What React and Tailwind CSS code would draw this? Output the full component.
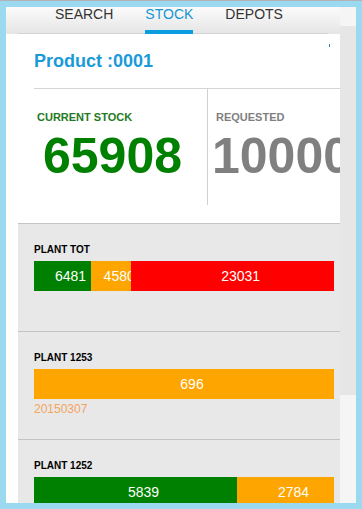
import React from "react";

const font = { fontFamily: '"Liberation Sans", Arial, sans-serif' };

function Bar({ segs }) {
  const total = segs.reduce((a, s) => a + s.v, 0);
  return (
    <div className="flex h-[30px] w-[300px]">
      {segs.map((s, i) => (
        <div
          key={i}
          className={`flex h-full items-center justify-center overflow-hidden whitespace-nowrap pl-4 text-[14px] leading-none text-white ${s.c}`}
          style={{ width: `${(s.v / total) * 100}%` }}
        >
          {s.v}
        </div>
      ))}
    </div>
  );
}

function Section({ label, segs, date }) {
  return (
    <div className="border-t border-[#c4c4c4] pl-4 pt-[20px] pb-[20px]">
      <div className="text-[10px] font-bold leading-[12px] text-black">{label}</div>
      <div className="mt-[5px]">
        <Bar segs={segs} />
      </div>
      <div className="h-[20px] text-[12px] leading-[20px] text-[#f4a460]">{date}</div>
    </div>
  );
}

export default function App() {
  return (
    <div className="h-[509px] w-[362px] bg-[#b3b3b3] pt-px" style={font}>
      <div className="flex h-[508px] w-[362px] overflow-hidden border-[6px] border-[#9ad9f0] bg-white">
        <div className="h-full w-[334px] overflow-hidden">
          {/* tab bar */}
          <div className="relative h-[27px] bg-gradient-to-b from-[#fbfbfb] to-[#e5e5e5]">
            <div className="absolute bottom-0 left-[12px] h-px w-[310px] bg-[#d4d4d4]" />
            <div className="flex gap-[32px] pl-[49px] text-[14px] leading-[14px]">
              <div className="text-[#333]">SEARCH</div>
              <div className="relative h-[27px] text-[#1496d4]">
                STOCK
                <div className="absolute bottom-0 left-0 h-[4px] w-full bg-[#0a9ee0]" />
              </div>
              <div className="text-[#333]">DEPOTS</div>
            </div>
          </div>
          {/* content */}
          <div className="flex">
            <div className="w-[12px] shrink-0" />
            <div className="w-[322px] shrink-0">
              <div className="relative bg-white">
                <div className="absolute right-[10px] top-[10px] h-[3px] w-px bg-[#1a8fd0]" />
                <div className="pl-[16px] pt-[17px] text-[18px] font-bold leading-[20px] text-[#1a9ad8]">
                  Product :0001
                </div>
                <div className="ml-4 mt-[17px] border-t border-[#d4d4d4]">
                  <div className="flex h-[116px] whitespace-nowrap">
                    <div className="w-[174px] shrink-0 border-r border-[#d0d0d0] pt-[22px]">
                      <div className="pl-[3px] text-[11px] font-bold leading-[12px] text-[#237a23]">
                        CURRENT STOCK
                      </div>
                      <div className="mt-[8px] pl-[9px] text-[50px] font-bold leading-[50px] text-[#008000]">
                        65908
                      </div>
                    </div>
                    <div className="pt-[22px]">
                      <div className="pl-[8px] text-[11px] font-bold leading-[12px] text-[#7f7f7f]">
                        REQUESTED
                      </div>
                      <div className="mt-[8px] pl-[4px] text-[50px] font-bold leading-[50px] text-[#808080]">
                        100000
                      </div>
                    </div>
                  </div>
                  <div className="h-[18px]" />
                </div>
              </div>
              <div className="bg-[#e8e8e8]">
                <Section
                  label="PLANT TOT"
                  segs={[
                    { v: 6481, c: "bg-[#008000]" },
                    { v: 4580, c: "bg-[#ffa500]" },
                    { v: 23031, c: "bg-[#ff0000]" },
                  ]}
                  date=""
                />
                <Section
                  label="PLANT 1253"
                  segs={[{ v: 696, c: "bg-[#ffa500]" }]}
                  date="20150307"
                />
                <Section
                  label="PLANT 1252"
                  segs={[
                    { v: 5839, c: "bg-[#008000]" },
                    { v: 2784, c: "bg-[#ffa500]" },
                  ]}
                  date=""
                />
              </div>
            </div>
          </div>
        </div>
        {/* scrollbar */}
        <div className="flex h-full w-[16px] flex-col bg-[#f5f5f5]">
          <div className="h-[19px]" />
          <div className="h-[369px] bg-[#e6e6e6]" />
        </div>
      </div>
    </div>
  );
}
